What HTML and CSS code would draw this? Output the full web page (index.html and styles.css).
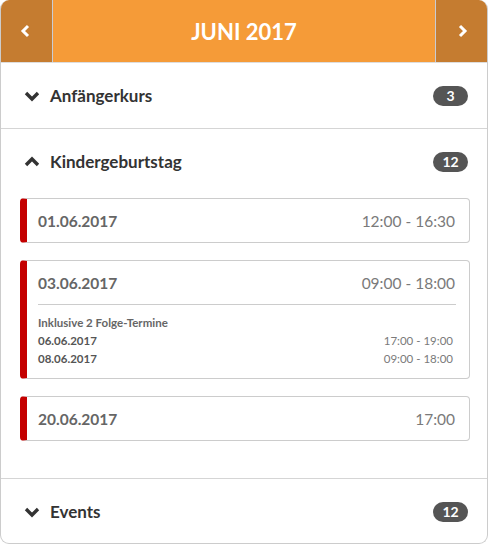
FILE: index.html
```html
<!DOCTYPE html>
<html>
<head>
<meta charset="utf-8">
<link rel="stylesheet" href="styles.css">
</head>
<body>
<div class="widget">
  <div class="month">
    <button class="nav nav-prev" aria-label="Zurück">
      <svg width="12" height="14" viewBox="0 0 12 14"><polyline points="8,2 3,7 8,12" fill="none" stroke="#fff" stroke-width="3"/></svg>
    </button>
    <div class="month-title">JUNI 2017</div>
    <button class="nav nav-next" aria-label="Weiter">
      <svg width="12" height="14" viewBox="0 0 12 14"><polyline points="4,2 9,7 4,12" fill="none" stroke="#fff" stroke-width="3"/></svg>
    </button>
  </div>

  <div class="section">
    <div class="section-head">
      <svg class="chev" width="16" height="12" viewBox="0 0 16 12"><polyline points="2,3 8,9 14,3" fill="none" stroke="#333" stroke-width="3.4"/></svg>
      <span class="section-title">Anfängerkurs</span>
      <span class="badge">3</span>
    </div>
  </div>

  <div class="section">
    <div class="section-head">
      <svg class="chev" width="16" height="12" viewBox="0 0 16 12"><polyline points="2,9 8,3 14,9" fill="none" stroke="#333" stroke-width="3.4"/></svg>
      <span class="section-title">Kindergeburtstag</span>
      <span class="badge">12</span>
    </div>
    <div class="section-body">
      <div class="event">
        <div class="event-main">
          <span class="event-date">01.06.2017</span>
          <span class="event-time">12:00 - 16:30</span>
        </div>
      </div>
      <div class="event">
        <div class="event-main">
          <span class="event-date">03.06.2017</span>
          <span class="event-time">09:00 - 18:00</span>
        </div>
        <div class="event-extra">
          <div class="extra-title">Inklusive 2 Folge-Termine</div>
          <div class="extra-row"><span class="extra-date">06.06.2017</span><span class="extra-time">17:00 - 19:00</span></div>
          <div class="extra-row"><span class="extra-date">08.06.2017</span><span class="extra-time">09:00 - 18:00</span></div>
        </div>
      </div>
      <div class="event">
        <div class="event-main">
          <span class="event-date">20.06.2017</span>
          <span class="event-time">17:00</span>
        </div>
      </div>
    </div>
  </div>

  <div class="section section-last">
    <div class="section-head">
      <svg class="chev" width="16" height="12" viewBox="0 0 16 12"><polyline points="2,3 8,9 14,3" fill="none" stroke="#333" stroke-width="3.4"/></svg>
      <span class="section-title">Events</span>
      <span class="badge">12</span>
    </div>
  </div>
</div>
</body>
</html>
```

FILE: styles.css
```css
* { box-sizing: border-box; }
html, body { margin: 0; padding: 0; background: #fff; }
body { font-family: Lato, "Open Sans", sans-serif; }

.widget {
  width: 488px;
  height: 544px;
  border: 1px solid #ccc;
  border-top: none;
  border-radius: 9px;
  overflow: hidden;
  background: #fff;
}

.month {
  display: flex;
  height: 63px;
  border-bottom: 1px solid #ddd;
  margin: 0 -1px;
}
.nav {
  border: none;
  padding: 0;
  margin: 0;
  background: #c57c30;
  display: flex;
  align-items: center;
  justify-content: center;
}
.nav-prev { border-right: 1px solid #c9ccd4; width: 53px; }
.nav-next { border-left: 1px solid #c9ccd4; width: 53px; }
.month-title {
  flex: 1;
  background: #f59b38;
  color: #fff;
  font-weight: 700;
  font-size: 22px;
  display: flex;
  align-items: center;
  justify-content: center;
  padding-top: 1px;
}

.section { border-bottom: 1px solid #d5d5d5; }
.section-last { border-bottom: none; }
.section-head {
  height: 65px;
  display: flex;
  align-items: center;
  padding: 0 19px 0 23px;
}
.chev { margin-right: 10px; margin-top: 1px; }
.section-title {
  flex: 1;
  font-weight: 700;
  font-size: 17px;
  color: #333;
}
.badge {
  background: #555;
  color: #fff;
  font-weight: 700;
  font-size: 14px;
  border-radius: 10px;
  min-width: 35px;
  height: 20px;
  line-height: 20px;
  text-align: center;
  padding: 0 8px;
}

.section-body {
  padding: 4px 17px 37px 19px;
  display: flex;
  flex-direction: column;
  gap: 17px;
}
.event {
  border: 1px solid #ccc;
  border-left: 7px solid #c40000;
  border-radius: 4px;
}
.event-main {
  height: 43px;
  display: flex;
  align-items: center;
  justify-content: space-between;
  padding: 0 14px 0 11px;
  font-size: 15.5px;
}
.event-date { font-weight: 700; color: #666; }
.event-time { color: #7a7a7a; }
.event-extra {
  margin: 0 13px 0 11px;
  border-top: 1px solid #ccc;
  padding: 10px 3px 10px 0;
}
.extra-title {
  font-size: 11.5px;
  font-weight: 700;
  color: #666;
  height: 16px;
  line-height: 16px;
  margin-bottom: 1px;
}
.extra-row {
  display: flex;
  justify-content: space-between;
  height: 18px;
  line-height: 18px;
  font-size: 11.5px;
}
.extra-date { font-weight: 700; color: #555; }
.extra-time { color: #7a7a7a; }
```
